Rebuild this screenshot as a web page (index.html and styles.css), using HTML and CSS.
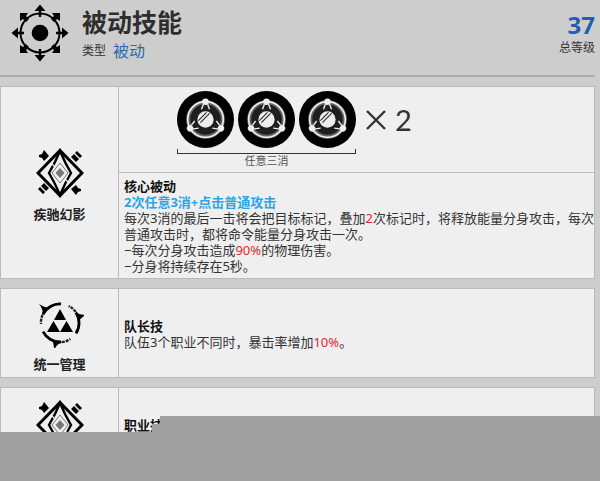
FILE: index.html
```html
<!DOCTYPE html>
<html lang="zh-CN">
<head>
<meta charset="utf-8">
<title>被动技能</title>
<link rel="stylesheet" href="styles.css">
</head>
<body>
<svg class="defs" aria-hidden="true">
  <defs>
    <symbol id="orb" viewBox="-28 -28 56 56">
      <circle r="28" fill="#000"/>
      <circle r="17" fill="#1f1f1f" stroke="#666" stroke-width="4"/>
      <circle r="17.5" fill="none" stroke="#eee" stroke-width="1.6"/>
      <g id="orb-arm">
        <circle cy="-17.500" r="3.200" fill="#eee"/>
        <path d="M-2-15L-4-10M2-15L4-10" stroke="#eee" stroke-width="1.4"/>
      </g>
      <use href="#orb-arm" transform="rotate(120)"/>
      <use href="#orb-arm" transform="rotate(240)"/>
      <circle r="8" fill="#eee"/>
      <path d="M-7 1L1-7M-5 3L4-6" stroke="#222" stroke-width="1"/>
    </symbol>
    <symbol id="phantom" viewBox="-24 -25 48 50">
      <path d="M0-22.500L22 0L0 22.500L-22 0Z" fill="none" stroke="#000" stroke-width="3"/>
      <path d="M0-22Q-5-10-11 0Q-5 10 0 22Q5 10 11 0Q5-10 0-22Z" fill="none" stroke="#000" stroke-width="2.400"/>
      <path d="M11-15L16-10M-15 11L-11 15M-8-9L-5-6M8 9L5 6" stroke="#efefef" stroke-width="1.300"/>
      <path d="M0-10L8 0L0 10L-8 0Z" fill="#efefef" stroke="#777" stroke-width="1"/>
      <path d="M0-5L4.500 0L0 5L-4.500 0Z" fill="#777"/>
      <path d="M-21-18L-18-19L-16-23L-11-17L-16-12L-18-15L-21-16ZM21 18L18 19L16 22L11 16L16 12L18 15L21 16Z" fill="#000"/>
      <path d="M17-22L22-17L20-15L15-20ZM14-19L19-14L16-11L11-16ZM-17 21L-22 16L-20 14L-15 19ZM-14 18L-19 13L-16 10L-11 15Z" fill="#000"/>
    </symbol>
    <symbol id="command" viewBox="-24 -25 48 50">
      <g id="command-arc">
        <path d="M-17-8.500A19 19 0 0 1 1-19" fill="none" stroke="#000" stroke-width="2.800"/>
        <path d="M-18-8Q-16-13-21-19Q-15-15-10-15.500Z" fill="#000"/>
        <path d="M-17.500-8A19 19 0 0 0-19 1" fill="none" stroke="#222" stroke-width="2.400" stroke-dasharray="3 1"/>
      </g>
      <use href="#command-arc" transform="rotate(120)"/>
      <use href="#command-arc" transform="rotate(240)"/>
      <path d="M0-14L6-3H-6ZM-6.500-2L0 9H-13ZM6.500-2L13 9H0Z" fill="#000"/>
    </symbol>
  </defs>
</svg>

<header class="head">
  <svg class="head-icon" viewBox="-29 -29 58 58" aria-hidden="true">
    <circle r="19.500" fill="none" stroke="#000" stroke-width="2"/>
    <circle r="8.300"/>
    <g id="points">
      <path d="M0-28.500L5.500-22H1.200V-16H-1.200V-22H-5.500Z"/>
      <path d="M20-20V-12L17-14L14-11L11-14L14-17L12-20Z"/>
    </g>
    <use href="#points" transform="rotate(90)"/>
    <use href="#points" transform="rotate(180)"/>
    <use href="#points" transform="rotate(270)"/>
  </svg>
  <div class="head-text">
    <h1>被动技能</h1>
    <p class="kind"><span>类型</span><a class="kind-link" href="#">被动</a></p>
  </div>
  <div class="level"><strong>37</strong><span>总等级</span></div>
</header>

<main class="skills">
  <section class="skill">
    <div class="skill-name">
      <svg class="skill-icon" aria-hidden="true"><use href="#phantom"/></svg>
      <h2>疾驰幻影</h2>
    </div>
    <div class="skill-info">
      <div class="combo">
        <div class="combo-set">
          <div class="orbs">
            <svg class="orb"><use href="#orb"/></svg>
            <svg class="orb"><use href="#orb"/></svg>
            <svg class="orb"><use href="#orb"/></svg>
          </div>
          <div class="bracket"></div>
          <div class="combo-label">任意三消</div>
        </div>
        <div class="times">
          <svg class="cross" viewBox="0 0 20 20" role="img" aria-label="×"><path d="M1 1L19 19M19 1L1 19" stroke="#333" stroke-width="2.400"/></svg>
          <span>2</span>
        </div>
      </div>
      <div class="text">
        <h3>核心被动</h3>
        <p class="trigger">2次任意3消+点击普通攻击</p>
        <p>每次3消的最后一击将会把目标标记，叠加<em>2</em>次标记时，将释放能量分身攻击，每次<br>普通攻击时，都将命令能量分身攻击一次。</p>
        <p>−每次分身攻击造成<em>90%</em>的物理伤害。</p>
        <p>−分身将持续存在5秒。</p>
      </div>
    </div>
  </section>

  <section class="skill">
    <div class="skill-name">
      <svg class="skill-icon" aria-hidden="true"><use href="#command"/></svg>
      <h2>统一管理</h2>
    </div>
    <div class="skill-info">
      <div class="text">
        <h3>队长技</h3>
        <p>队伍3个职业不同时，暴击率增加<em>10%</em>。</p>
      </div>
    </div>
  </section>

  <section class="skill clipped">
    <div class="skill-name">
      <svg class="skill-icon" aria-hidden="true"><use href="#phantom"/></svg>
    </div>
    <div class="skill-info">
      <div class="text">
        <h3>职业技</h3>
      </div>
    </div>
  </section>
</main>
<div class="cover"></div>
</body>
</html>
```
FILE: styles.css
```css
* { box-sizing: border-box; }

body {
  position: relative;
  margin: 0;
  height: 100vh;
  overflow: hidden;
  background: #cdcdcd;
  color: #333;
  font: 13px/16px "Noto Sans", "Noto Sans CJK SC", sans-serif;
}

h1, h2, h3, p { margin: 0; }
em { color: #e3262e; font-style: normal; }
.defs { position: absolute; width: 0; height: 0; }

.head {
  display: flex;
  align-items: flex-start;
  margin-right: 5px;
  padding: 4px 0 10px 11px;
  height: 77px;
  border-bottom: 2px solid #acacb2;
}
.head-icon { width: 58px; height: 58px; }
.head-text { flex: 1; padding: 3px 0 0 13px; }
h1 { color: #2e2e2e; font-size: 25px; line-height: 30px; }
.kind { display: flex; align-items: center; gap: 7px; font-size: 12px; line-height: 28px; }
.kind-link { color: #2b6ab0; font-size: 16px; text-decoration: none; }
.level {
  display: flex;
  flex-direction: column;
  align-items: flex-end;
  padding-top: 7px;
  font-size: 12px;
  line-height: 18px;
}
.level strong { color: #1d62b0; font-size: 24px; line-height: 28px; }

.skills { display: grid; gap: 9px; margin: 9px 5px 0 0; }
.skill {
  display: grid;
  grid-template-columns: 118px 1fr;
  min-height: 90px;
  border: 1px solid #bababa;
  background: #efefef;
}
.skill-name {
  display: flex;
  flex-direction: column;
  align-items: center;
  justify-content: center;
  gap: 8px;
  padding-top: 4px;
  border-right: 1px solid #bababa;
}
.skill-icon { width: 48px; height: 50px; }
h2 { color: #222; font-size: 13px; line-height: 16px; }
.skill-info { display: flex; flex-direction: column; justify-content: center; }
h3 { color: #111; font-size: 13px; line-height: 16px; }
.text { padding: 5px 0 4px 5px; }
.trigger { color: #2ea3e6; font-weight: bold; }

.clipped .skill-name { justify-content: flex-start; padding-top: 12px; }
.clipped .skill-info { justify-content: flex-start; padding-top: 24px; }

.combo {
  display: flex;
  align-items: flex-start;
  gap: 10px;
  padding: 4px 0 4px 58px;
  border-bottom: 1px solid #bababa;
}
.combo-set { width: 179px; }
.orbs { display: flex; justify-content: space-between; }
.orb { width: 57px; height: 57px; }
.bracket {
  height: 5px;
  margin-top: 1px;
  border: 1px solid #333;
  border-top: 0;
}
.combo-label { color: #555; font-size: 11px; line-height: 14px; text-align: center; }
.times {
  display: flex;
  align-items: center;
  gap: 9px;
  height: 57px;
  color: #333;
  font: 29px/32px Lato, sans-serif;
}
.cross { width: 20px; height: 20px; }

.cover {
  position: absolute;
  right: 0;
  bottom: 0;
  left: 0;
  height: 65px;
  background: #a0a0a0;
  clip-path: polygon(0 16px, 152px 16px, 152px 8px, 160px 8px, 160px 0, 100% 0, 100% 100%, 0 100%);
}
```
